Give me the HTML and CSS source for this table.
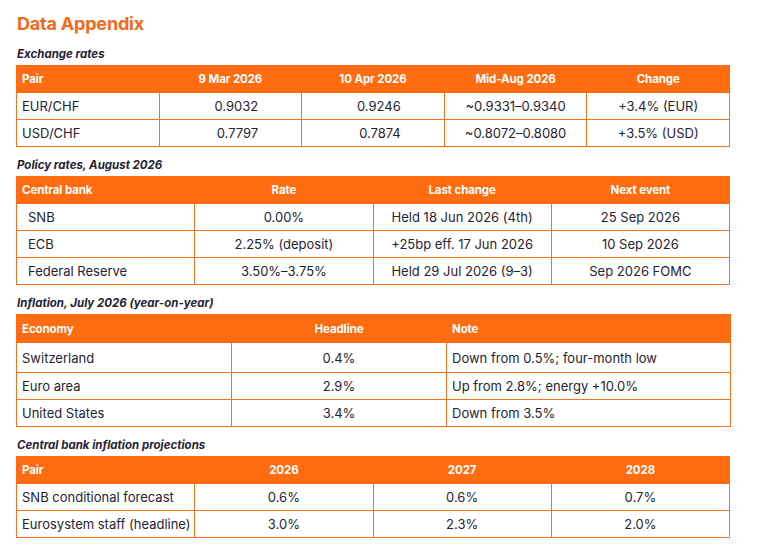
FILE: index.html
```html
<!DOCTYPE html>
<html lang="en">
<head>
<meta charset="utf-8">
<title>Data Appendix</title>
<link rel="stylesheet" href="styles.css">
</head>
<body>
<main class="page">
  <h1 class="title">Data Appendix</h1>

  <section class="block">
    <h2 class="label">Exchange rates</h2>
    <table class="grid">
      <colgroup><col class="c5"><col class="c5"><col class="c5"><col class="c5"><col class="c5"></colgroup>
      <thead>
        <tr><th class="left">Pair</th><th>9 Mar 2026</th><th>10 Apr 2026</th><th>Mid-Aug 2026</th><th>Change</th></tr>
      </thead>
      <tbody>
        <tr><td class="left">EUR/CHF</td><td class="num">0.9032</td><td class="num">0.9246</td><td>~0.9331–0.9340</td><td>+3.4% (EUR)</td></tr>
        <tr><td class="left">USD/CHF</td><td class="num">0.7797</td><td class="num">0.7874</td><td>~0.8072–0.8080</td><td>+3.5% (USD)</td></tr>
      </tbody>
    </table>
  </section>

  <section class="block">
    <h2 class="label">Policy rates, August 2026</h2>
    <table class="grid">
      <colgroup><col class="c4"><col class="c4"><col class="c4"><col class="c4"></colgroup>
      <thead>
        <tr><th class="left">Central bank</th><th>Rate</th><th>Last change</th><th>Next event</th></tr>
      </thead>
      <tbody>
        <tr><td class="left indent">SNB</td><td>0.00%</td><td>Held 18 Jun 2026 (4th)</td><td>25 Sep 2026</td></tr>
        <tr><td class="left indent">ECB</td><td>2.25% (deposit)</td><td>+25bp eff. 17 Jun 2026</td><td>10 Sep 2026</td></tr>
        <tr><td class="left indent">Federal Reserve</td><td>3.50%–3.75%</td><td>Held 29 Jul 2026 (9–3)</td><td>Sep 2026 FOMC</td></tr>
      </tbody>
    </table>
  </section>

  <section class="block">
    <h2 class="label">Inflation, July 2026 (year-on-year)</h2>
    <table class="grid tall">
      <colgroup><col class="c-econ"><col class="c-econ"><col class="c-note"></colgroup>
      <thead>
        <tr><th class="left">Economy</th><th>Headline</th><th class="left">Note</th></tr>
      </thead>
      <tbody>
        <tr class="first"><td class="left">Switzerland</td><td>0.4%</td><td class="left">Down from 0.5%; four-month low</td></tr>
        <tr><td class="left">Euro area</td><td>2.9%</td><td class="left">Up from 2.8%; energy +10.0%</td></tr>
        <tr><td class="left">United States</td><td>3.4%</td><td class="left">Down from 3.5%</td></tr>
      </tbody>
    </table>
  </section>

  <section class="block">
    <h2 class="label">Central bank inflation projections</h2>
    <table class="grid">
      <colgroup><col class="c4"><col class="c4"><col class="c4"><col class="c4"></colgroup>
      <thead>
        <tr><th class="left">Pair</th><th>2026</th><th>2027</th><th>2028</th></tr>
      </thead>
      <tbody>
        <tr><td class="left">SNB conditional forecast</td><td>0.6%</td><td>0.6%</td><td>0.7%</td></tr>
        <tr><td class="left">Eurosystem staff (headline)</td><td>3.0%</td><td>2.3%</td><td>2.0%</td></tr>
      </tbody>
    </table>
  </section>
</main>
</body>
</html>
```

FILE: styles.css
```css
html, body {
  margin: 0;
  padding: 0;
  background: #ffffff;
}

body {
  font-family: Inter, "Noto Sans", "Liberation Sans", sans-serif;
  color: #1f2433;
}

.page {
  padding: 13px 16px 0 16px;
  width: 714px;
}

.title {
  margin: 0 0 0 1px;
  font-size: 18px;
  line-height: 22px;
  font-weight: 700;
  color: #f2691c;
  letter-spacing: -0.2px;
}

.block {
  margin-top: 12px;
}

.block + .block {
  margin-top: 11px;
}

.label {
  margin: 0 0 3px 1px;
  font-size: 11.5px;
  line-height: 15px;
  font-weight: 700;
  font-style: italic;
  color: #1f2433;
}

.grid {
  width: 714px;
  border-collapse: collapse;
  table-layout: fixed;
  font-size: 13px;
}

.c5 { width: 20%; }
.c4 { width: 25%; }
.c-econ { width: 215px; }
.c-note { width: 284px; }

.grid th {
  background: #ff6b10;
  color: #ffffff;
  font-weight: 700;
  font-size: 11.5px;
  height: 26px;
  padding: 0 5px;
  text-align: center;
  border: 1px solid #ff6b10;
  letter-spacing: -0.1px;
}

.grid td {
  height: 26px;
  padding: 0 5px;
  text-align: center;
  border: 1px solid #f7731e;
  white-space: nowrap;
}

.grid .left {
  text-align: left;
}

.grid td.indent {
  padding-left: 11px;
}

.grid td.num {
  text-align: right;
  padding-right: 43px;
}

.tall th {
  height: 27px;
}

.tall tr.first td {
  height: 29px;
}
```
